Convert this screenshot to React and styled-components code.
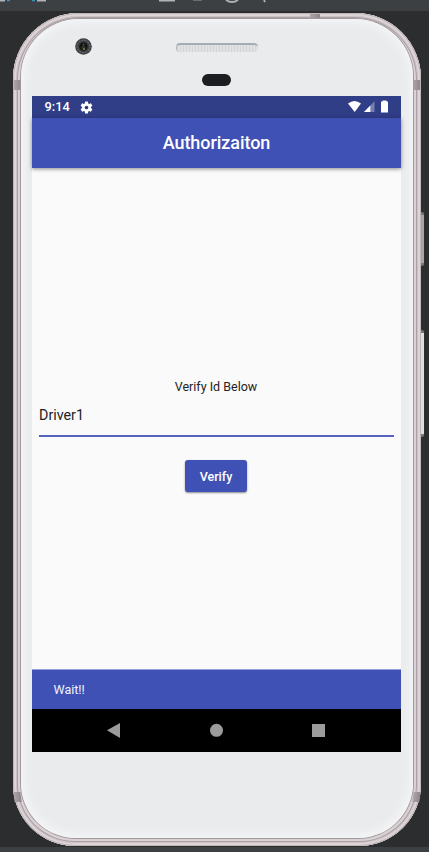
import React from "react";
import styled, { createGlobalStyle } from "styled-components";

const Global = createGlobalStyle`
  *, *::before, *::after { box-sizing: border-box; }
  html, body { margin: 0; padding: 0; overflow: hidden; background: #2d2f30; }
  body { font-family: Roboto, "Liberation Sans", sans-serif; }
`;

const Desktop = styled.main`
  position: relative;
  width: 429px;
  height: 852px;
  padding: 13px 8px 0 13px;
  overflow: hidden;
  background: linear-gradient(#3c4042 0 11px, #2b2d2e 11px 847px, #3c4043 847px);
`;

const ToolbarGlyphs = styled.svg`
  position: absolute;
  top: 0;
  left: 0;
`;

const Casing = styled.div`
  position: relative;
  width: 408px;
  height: 833px;
  padding: 6px 8px 8px;
  border-radius: 66px 66px 62px 62px;
  background: #d9d0d3;
  box-shadow: inset 0 0 0 1px #bdb4b7, inset 0 0 0 3px #ddd4d7,
    inset 0 0 0 4px #cbc2c5, inset 0 0 0 5px #aaa1a5, inset 0 0 0 6px #dbd2d5;
`;

const SideKey = styled.span`
  position: absolute;
  left: 408px;
  top: ${(p) => p.$top}px;
  width: 3px;
  height: ${(p) => p.$height}px;
  border-radius: 0 2px 2px 0;
  border: solid #777675;
  border-width: 3px 0;
  background: ${(p) => p.$color};
`;

const Antenna = styled.span`
  position: absolute;
  left: ${(p) => p.$left}px;
  top: ${(p) => p.$top}px;
  width: ${(p) => p.$width || 7}px;
  height: ${(p) => p.$height || 10}px;
  background: linear-gradient(90deg, #aca4a8, #8f878b);
  transform: skewX(${(p) => p.$skew || 0}deg);
`;

const Face = styled.div`
  position: relative;
  width: 392px;
  height: 819px;
  border-radius: 58px 58px 55px 55px;
  background: #e9ebec;
  box-shadow: inset 0 0 9px 4px #f5f5f8, 0 0 0 1px #a19a9d;
`;

const Earpiece = styled.header`
  height: 77px;
  padding: 19px 0 0 54px;
  display: grid;
  grid-template-columns: 17px 82px;
  column-gap: 84px;
  align-content: start;
`;

const Speaker = styled.div`
  height: 9px;
  margin-top: 5px;
  border-radius: 4px;
  border-top: 2px solid #a5acb2;
  border-left: 1px solid #b5babd;
  background: repeating-linear-gradient(90deg, #d3d5d7 0 1px, #dfe1e2 1px 3px);
`;

const Sensor = styled.div`
  grid-column: 2;
  width: 29px;
  height: 12px;
  margin: 19px 0 0 26px;
  border-radius: 6px;
  background: #1c1e22;
`;

const Screen = styled.section`
  width: 369px;
  height: 656px;
  margin-left: 11px;
  display: flex;
  flex-direction: column;
  background: #fafafa;
`;

const StatusBar = styled.div`
  height: 22px;
  padding: 0 12px 0 12.5px;
  display: flex;
  align-items: center;
  background: #303d87;
  color: #fff;
`;

const Clock = styled.time`
  width: 35px;
  font-size: 12.8px;
  font-weight: 500;
  line-height: 22px;
`;

const StatusIcons = styled.svg`
  margin-left: auto;
`;

const AppBar = styled.h1`
  height: 50px;
  margin: 0;
  flex: none;
  background: #3f51b4;
  box-shadow: 0 1px 4px rgba(0, 0, 0, 0.45);
  color: #fff;
  font-size: 18px;
  font-weight: 500;
  letter-spacing: -0.06px;
  line-height: 50px;
  text-align: center;
`;

const Form = styled.form`
  flex: 1;
  padding: 211px 7px 0;
  display: flex;
  flex-direction: column;
  align-items: center;
`;

const Label = styled.label`
  margin-right: 1px;
  font-size: 12.5px;
  line-height: 16px;
  color: #242424;
`;

const Field = styled.input`
  width: 100%;
  height: 42px;
  padding: 0;
  border: 0;
  border-bottom: 2px solid #5463bd;
  outline: 0;
  border-radius: 0;
  background: transparent;
  color: #222;
  font: 400 14.3px Roboto, sans-serif;
`;

const VerifyButton = styled.button`
  width: 62px;
  height: 32px;
  margin: 23px 1px 0 0;
  padding: 0;
  border: 0;
  border-radius: 3px;
  background: #3f51b4;
  box-shadow: 0 1px 2px rgba(0, 0, 0, 0.45);
  color: #fff;
  font: 500 12.5px Roboto, sans-serif;
`;

const Snackbar = styled.div`
  height: 40px;
  padding-left: 21.5px;
  border-top: 1px solid #98a1d7;
  background: #3f51b4;
  color: #f2f3fb;
  font-size: 12.5px;
  line-height: 39px;
`;

const NavBar = styled.nav`
  height: 43px;
  background: #000;
`;

function Camera() {
  return (
    <svg width="17" height="17" viewBox="0 0 17 17">
      <circle cx="8.5" cy="8.5" r="8.3" fill="#3c3e42" />
      <circle cx="8.5" cy="8.5" r="6.3" fill="none" stroke="#606266" strokeWidth="1.4" strokeDasharray="2 1" />
      <circle cx="8.5" cy="8.5" r="4.2" fill="#151618" />
      <circle cx="8.5" cy="9.5" r="2" fill="#34351f" />
      <circle cx="9" cy="11" r="1" fill="#85833b" />
      <circle cx="8.5" cy="6.5" r="0.7" fill="#65696e" />
    </svg>
  );
}

function Gear() {
  return (
    <svg width="13" height="13" viewBox="1.5 1.5 21 21" fill="#fff">
      <path d="M19.14 12.94c.04-.3.06-.61.06-.94s-.02-.64-.07-.94l2.03-1.58a.49.49 0 0 0 .12-.61l-1.92-3.32a.49.49 0 0 0-.59-.22l-2.39.96a7 7 0 0 0-1.62-.94l-.36-2.54a.48.48 0 0 0-.48-.41h-3.84a.48.48 0 0 0-.47.41l-.36 2.54a7 7 0 0 0-1.62.94l-2.39-.96a.49.49 0 0 0-.59.22L2.74 8.87a.48.48 0 0 0 .12.61l2.03 1.58a7 7 0 0 0 0 1.88l-2.03 1.58a.49.49 0 0 0-.12.61l1.92 3.32c.12.22.37.29.59.22l2.39-.96c.5.38 1.03.7 1.62.94l.36 2.54c.05.24.24.41.48.41h3.84c.24 0 .44-.17.47-.41l.36-2.54a7 7 0 0 0 1.62-.94l2.39.96c.22.08.47 0 .59-.22l1.92-3.32a.48.48 0 0 0-.12-.61zM12 15a3 3 0 1 1 0-6 3 3 0 0 1 0 6z" />
    </svg>
  );
}

export default function App() {
  return (
    <>
      <Global />
      <Desktop>
        <ToolbarGlyphs width="429" height="4" viewBox="0 0 429 4">
          <path d="M0 0h5v1.5H0zM37 0h9v1.5h-9zM159 0h16v1.5h-16z" fill="#aeb3b5" />
          <path d="M7 0h3v1.2H7zM32 0h3v1.2h-3z" fill="#3592c4" />
          <path d="M193 0h9v1h-9z" fill="#6b6e70" />
          <path d="M226 0q6 4 12 0M264 0l1 2" stroke="#aeb3b5" strokeWidth="1.8" fill="none" />
        </ToolbarGlyphs>
        <Casing>
          <SideKey $top={199} $height={54} $color="#a8a5a5" />
          <SideKey $top={317} $height={107} $color="#dde0db" />
          <Antenna $left={1} $top={67} />
          <Antenna $left={400} $top={67} />
          <Antenna $left={1} $top={779} $skew={8} />
          <Antenna $left={400} $top={779} $skew={-8} />
          <Antenna $left={297} $top={1} $width={10} $height={4} />
          <Face>
            <Earpiece>
              <Camera />
              <Speaker />
              <Sensor />
            </Earpiece>
            <Screen>
              <StatusBar>
                <Clock>9:14</Clock>
                <Gear />
                <StatusIcons width="41" height="14" viewBox="0 0 41 14" fill="#fff">
                  <path d="M0 3.6Q6.5-1.4 13 3.6L6.7 12Z" />
                  <path d="M26.5 1.2V12H16Z" fillOpacity=".35" />
                  <path d="M22.3 5.5V12H16Z" />
                  <path d="M34.5 1.5V.5h4v1h1.5V12.5h-7V1.5Z" />
                </StatusIcons>
              </StatusBar>
              <AppBar>Authorizaiton</AppBar>
              <Form onSubmit={(event) => event.preventDefault()}>
                <Label htmlFor="driver-id">Verify Id Below</Label>
                <Field id="driver-id" defaultValue="Driver1" />
                <VerifyButton>Verify</VerifyButton>
              </Form>
              <Snackbar role="status">Wait!!</Snackbar>
              <NavBar>
                <svg width="369" height="43" viewBox="0 0 369 43" fill="#9b9b9b">
                  <path d="M75 21.3 88 14v15Z" />
                  <circle cx="184.5" cy="21.3" r="6.5" />
                  <path d="M280 15h13v13h-13z" />
                </svg>
              </NavBar>
            </Screen>
          </Face>
        </Casing>
      </Desktop>
    </>
  );
}
